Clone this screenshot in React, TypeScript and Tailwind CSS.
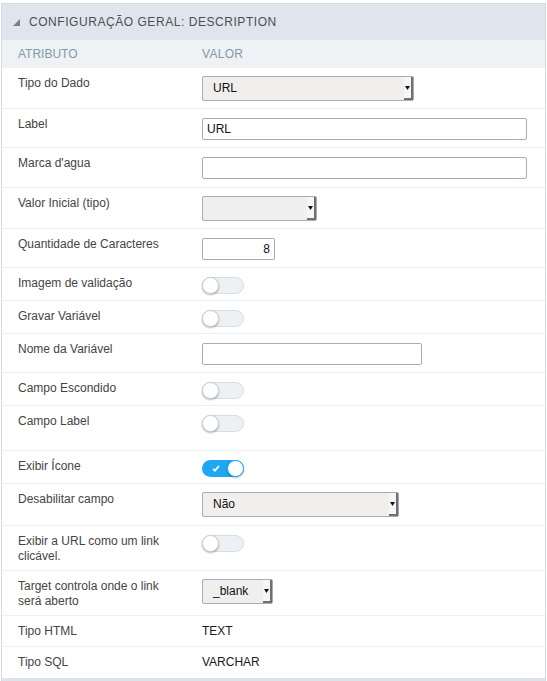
import React from "react";

const font = { fontFamily: '"Liberation Sans", Arial, sans-serif' };

function Select({ value, width }: { value: string; width: string }) {
  return (
    <div className={`relative h-[25px] ${width} border border-[#a6adb6] rounded-[2px] bg-[#f0efed] flex items-center`}>
      <span className="pl-[10px] text-[12px] text-[#111]">{value}</span>
      <div className="absolute right-0 top-0 bottom-0 w-[9px] bg-[#f6f6f6] border-r-2 border-b-2 border-[#707070] flex items-center justify-center">
        <svg width="5" height="4" viewBox="0 0 5 4">
          <polygon points="0,0 5,0 2.5,4" fill="#111" />
        </svg>
      </div>
    </div>
  );
}

function Input({ value, width, right }: { value?: string; width: string; right?: boolean }) {
  return (
    <div
      className={`h-[22px] ${width} border border-[#a6adb6] rounded-[2px] bg-white flex items-center px-[4px] ${
        right ? "justify-end" : ""
      }`}
    >
      <span className="text-[12px] text-[#111]">{value}</span>
    </div>
  );
}

function Toggle({ on }: { on?: boolean }) {
  if (on) {
    return (
      <div className="relative h-[17px] w-[42px] rounded-full bg-[#1fa7f4] flex items-center">
        <svg className="ml-[10px]" width="8" height="7" viewBox="0 0 8 7">
          <path d="M1 3.8 L3 5.6 L7 1" stroke="white" strokeWidth="1.8" fill="none" />
        </svg>
        <div className="absolute right-0 top-0 h-[17px] w-[17px] rounded-full bg-white border border-[#1fa7f4] shadow-[0_1px_2px_rgba(0,0,0,0.25)]" />
      </div>
    );
  }
  return (
    <div className="relative h-[17px] w-[42px] rounded-full bg-[#edf1f4] border border-[#d6dce2]">
      <div className="absolute left-[-1px] top-[-1px] h-[17px] w-[17px] rounded-full bg-white border border-[#c9d0d6] shadow-[0_1px_2px_rgba(0,0,0,0.3)]" />
    </div>
  );
}

type Row = { label: string; h: string; value: React.ReactNode };

const rows: Row[] = [
  { label: "Tipo do Dado", h: "h-[41px]", value: <Select value="URL" width="w-[212px]" /> },
  { label: "Label", h: "h-[39px]", value: <div className="pt-[1px]"><Input value="URL" width="w-[325px]" /></div> },
  { label: "Marca d'agua", h: "h-[40px]", value: <div className="pt-[1px]"><Input width="w-[325px]" /></div> },
  { label: "Valor Inicial (tipo)", h: "h-[41px]", value: <Select value="" width="w-[115px]" /> },
  { label: "Quantidade de Caracteres", h: "h-[39px]", value: <div className="pt-[1px]"><Input value="8" width="w-[73px]" right /></div> },
  { label: "Imagem de validação", h: "h-[33px]", value: <div className="pt-[1px]"><Toggle /></div> },
  { label: "Gravar Variável", h: "h-[33px]", value: <div className="pt-[1px]"><Toggle /></div> },
  { label: "Nome da Variável", h: "h-[39px]", value: <div className="pt-[1px]"><Input width="w-[220px]" /></div> },
  { label: "Campo Escondido", h: "h-[33px]", value: <div className="pt-[1px]"><Toggle /></div> },
  { label: "Campo Label", h: "h-[45px]", value: <div className="pt-[1px]"><Toggle /></div> },
  { label: "Exibir Ícone", h: "h-[33px]", value: <div className="pt-[1px]"><Toggle on /></div> },
  { label: "Desabilitar campo", h: "h-[42px]", value: <Select value="Não" width="w-[197px]" /> },
  { label: "Exibir a URL como um link clicável.", h: "h-[45px]", value: <div className="pt-[1px]"><Toggle /></div> },
  { label: "Target controla onde o link será aberto", h: "h-[45px]", value: <Select value="_blank" width="w-[71px]" /> },
  { label: "Tipo HTML", h: "h-[31px]", value: <div className="text-[12px] leading-[15px] text-[#1a1a1a]">TEXT</div> },
  { label: "Tipo SQL", h: "h-[31px]", value: <div className="text-[12px] leading-[15px] text-[#1a1a1a]">VARCHAR</div> },
];

export default function App() {
  return (
    <div className="w-[547px] h-[681px] bg-white overflow-hidden pt-[3px]" style={font}>
      <div className="ml-[1px] w-[545px] border-l border-t border-r border-[#d3dae2]">
        <div className="h-[36px] bg-[#dfe5ec] flex items-center pl-[11px]">
          <svg width="8" height="7" viewBox="0 0 8 7" className="mt-[1px]">
            <polygon points="7,0 7,7 0,7" fill="#7a7f85" />
          </svg>
          <span className="ml-[8px] text-[12px] tracking-[0.55px] text-[#4d4f52]">CONFIGURAÇÃO GERAL: DESCRIPTION</span>
        </div>
        <div className="h-[28px] bg-[#eef2f5] flex items-center">
          <span className="pl-[16px] w-[200px] text-[12px] text-[#7f9aaa]">ATRIBUTO</span>
          <span className="text-[12px] text-[#7f9aaa] tracking-[0.3px]">VALOR</span>
        </div>
        {rows.map((r, i) => (
          <div
            key={i}
            className={`${r.h} flex items-start pt-[8px] leading-[15px] ${i < rows.length - 1 ? "border-b border-[#eceff3]" : ""}`}
          >
            <div className="w-[200px] pl-[16px] pr-[26px] text-[12px] leading-[15px] text-[#444]">{r.label}</div>
            <div className="leading-[15px]">{r.value}</div>
          </div>
        ))}
        <div className="h-[5px] bg-[#dde3ea]" />
      </div>
    </div>
  );
}
